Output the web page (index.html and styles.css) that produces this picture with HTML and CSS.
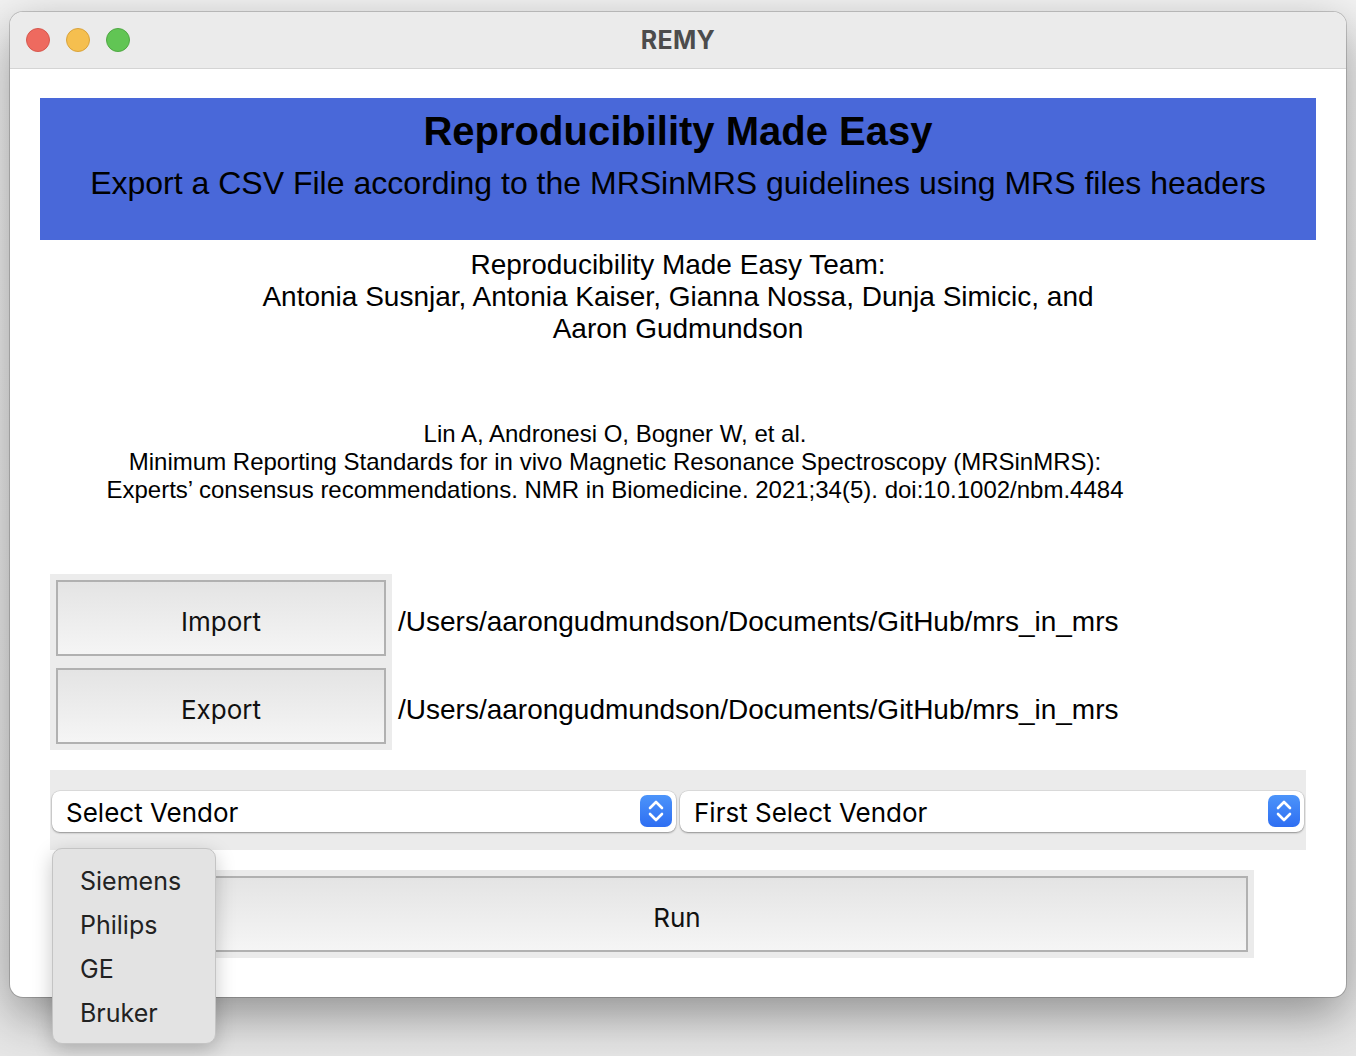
FILE: index.html
```html
<!DOCTYPE html>
<html>
<head>
<meta charset="utf-8">
<title>REMY</title>
<link rel="stylesheet" href="styles.css">
</head>
<body>
<div class="desktop">
  <div class="window">
    <div class="titlebar">
      <div class="lights">
        <span class="light red"></span>
        <span class="light yellow"></span>
        <span class="light green"></span>
      </div>
      <div class="wtitle">REMY</div>
    </div>
    <div class="content">
      <div class="banner">
        <div class="banner-title">Reproducibility Made Easy</div>
        <div class="banner-sub">Export a CSV File according to the MRSinMRS guidelines using MRS files headers</div>
      </div>
      <div class="team">Reproducibility Made Easy Team:<br>Antonia Susnjar, Antonia Kaiser, Gianna Nossa, Dunja Simicic, and<br>Aaron Gudmundson</div>
      <div class="cite">Lin A, Andronesi O, Bogner W, et al.<br>Minimum Reporting Standards for in vivo Magnetic Resonance Spectroscopy (MRSinMRS):<br>Experts’ consensus recommendations. NMR in Biomedicine. 2021;34(5). doi:10.1002/nbm.4484</div>

      <div class="io">
        <div class="io-buttons">
          <div class="btn io-btn">Import</div>
          <div class="btn io-btn">Export</div>
        </div>
        <div class="io-paths">
          <div class="path">/Users/aarongudmundson/Documents/GitHub/mrs_in_mrs</div>
          <div class="path">/Users/aarongudmundson/Documents/GitHub/mrs_in_mrs</div>
        </div>
      </div>

      <div class="vendors">
        <div class="combo"><span class="combo-text">Select Vendor</span><span class="stepper"><svg width="20" height="26" viewBox="0 0 20 26"><path d="M4 10 L10 4 L16 10" fill="none" stroke="#fff" stroke-width="2.6" stroke-linecap="round" stroke-linejoin="round"/><path d="M4 16 L10 22 L16 16" fill="none" stroke="#fff" stroke-width="2.6" stroke-linecap="round" stroke-linejoin="round"/></svg></span></div>
        <div class="combo"><span class="combo-text">First Select Vendor</span><span class="stepper"><svg width="20" height="26" viewBox="0 0 20 26"><path d="M4 10 L10 4 L16 10" fill="none" stroke="#fff" stroke-width="2.6" stroke-linecap="round" stroke-linejoin="round"/><path d="M4 16 L10 22 L16 16" fill="none" stroke="#fff" stroke-width="2.6" stroke-linecap="round" stroke-linejoin="round"/></svg></span></div>
      </div>

      <div class="run-wrap">
        <div class="btn run-btn">Run</div>
      </div>
    </div>

    <div class="popup">
      <div class="popup-item">Siemens</div>
      <div class="popup-item">Philips</div>
      <div class="popup-item">GE</div>
      <div class="popup-item">Bruker</div>
    </div>
  </div>
</div>
</body>
</html>
```

FILE: styles.css
```css
html, body {
  margin: 0;
  padding: 0;
}
body {
  width: 1356px;
  height: 1056px;
  overflow: hidden;
  background: linear-gradient(#f2f2f2, #e6e6e6);
  font-family: "Liberation Sans", Arial, sans-serif;
}
.desktop {
  padding: 12px 10px 0 10px;
}
.window {
  position: relative;
  width: 1336px;
  height: 985px;
  border-radius: 13px;
  background: #fff;
  box-shadow: 0 0 0 1px rgba(0,0,0,0.18), 0 18px 50px rgba(0,0,0,0.38);
  display: flex;
  flex-direction: column;
}
.titlebar {
  height: 56px;
  flex: none;
  background: #ebebeb;
  border-bottom: 1px solid #d4d4d4;
  border-radius: 13px 13px 0 0;
  display: flex;
  align-items: center;
  justify-content: center;
  position: relative;
}
.lights {
  position: absolute;
  left: 16px;
  top: 16px;
  display: flex;
  gap: 16px;
}
.light {
  width: 24px;
  height: 24px;
  border-radius: 50%;
  box-sizing: border-box;
}
.red { background: #ee6a5f; border: 1px solid #d6584e; }
.yellow { background: #f5bf4f; border: 1px solid #d9a33c; }
.green { background: #61c554; border: 1px solid #50a844; }
.wtitle {
  font-family: Inter, "Open Sans", sans-serif;
  font-weight: 700;
  font-size: 25px;
  color: #4c4c4c;
  letter-spacing: 0.3px;
}
.content {
  flex: 1;
  display: flex;
  flex-direction: column;
  border-radius: 0 0 13px 13px;
}
.banner {
  margin: 29px 30px 0 30px;
  height: 142px;
  background: #4968d9;
  text-align: center;
  color: #000;
}
.banner-title {
  font-weight: 700;
  font-size: 40px;
  line-height: 46px;
  margin-top: 10px;
}
.banner-sub {
  font-size: 32px;
  line-height: 36px;
  margin-top: 11px;
}
.team {
  margin-top: 9px;
  text-align: center;
  font-size: 28px;
  line-height: 32px;
  color: #000;
}
.cite {
  margin-top: 75px;
  margin-right: 126px;
  text-align: center;
  font-size: 24px;
  line-height: 28px;
  color: #000;
}
.io {
  margin-top: 70px;
  margin-left: 40px;
  display: flex;
  align-items: flex-start;
}
.io-buttons {
  background: #ececec;
  padding: 6px;
  display: flex;
  flex-direction: column;
  gap: 12px;
}
.btn {
  box-sizing: border-box;
  border: 2px solid #b1b1b1;
  background: linear-gradient(#e4e4e4, #f5f5f5);
  display: flex;
  align-items: center;
  justify-content: center;
  padding-top: 6px;
  font-family: Inter, "Open Sans", sans-serif;
  font-size: 26px;
  color: #111;
}
.io-btn {
  width: 330px;
  height: 76px;
}
.io-paths {
  display: flex;
  flex-direction: column;
  padding-left: 6px;
}
.path {
  font-size: 28px;
  color: #000;
  height: 88px;
  line-height: 96px;
  white-space: nowrap;
}
.vendors {
  margin: 20px 40px 0 40px;
  background: #ebebeb;
  height: 80px;
  display: flex;
  align-items: center;
  padding: 0 2px;
  gap: 4px;
}
.combo {
  flex: 1;
  height: 41px;
  background: #fff;
  border-radius: 8px;
  box-shadow: 0 1px 2px rgba(0,0,0,0.35), 0 0 0 0.5px rgba(0,0,0,0.12);
  display: flex;
  align-items: center;
  justify-content: space-between;
  padding: 0 4px 0 14px;
  margin-top: 2px;
}
.combo-text {
  font-family: Inter, "Open Sans", sans-serif;
  font-size: 26px;
  color: #000;
  padding-top: 2px;
}
.stepper {
  width: 32px;
  height: 32px;
  border-radius: 7px;
  background: linear-gradient(#4c94fa, #2e6ef2);
  display: flex;
  align-items: center;
  justify-content: center;
}
.run-wrap {
  margin: 20px 92px 0 90px;
  background: #ebebeb;
  padding: 6px;
}
.run-btn {
  height: 76px;
}
.popup {
  position: absolute;
  left: 42px;
  top: 836px;
  width: 164px;
  height: 196px;
  box-sizing: border-box;
  background: #e3e3e3;
  border: 1px solid #c4c4c4;
  border-radius: 10px;
  box-shadow: 0 6px 20px rgba(0,0,0,0.22);
  padding-top: 10px;
}
.popup-item {
  height: 44px;
  line-height: 44px;
  padding-left: 27px;
  font-family: Inter, "Open Sans", sans-serif;
  font-size: 25px;
  color: #222;
}
```
